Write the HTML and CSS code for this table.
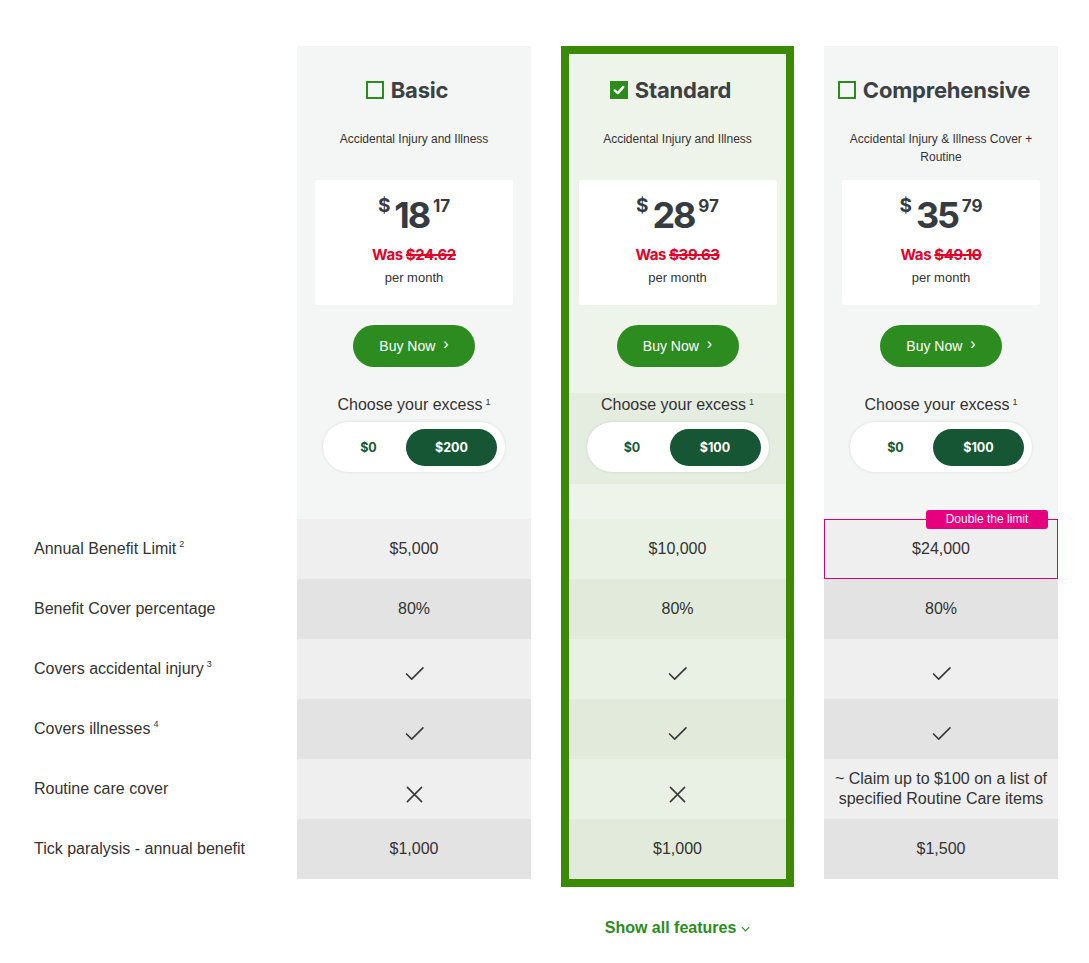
FILE: index.html
```html
<!DOCTYPE html>
<html lang="en">
<head>
<meta charset="utf-8">
<title>Compare plans</title>
<link rel="stylesheet" href="styles.css">
</head>
<body>
<div class="page">
  <div class="compare">
    <div class="labels">
      <div class="labels-head"></div>
      <div class="label-row">Annual Benefit Limit<sup>2</sup></div>
      <div class="label-row">Benefit Cover percentage</div>
      <div class="label-row">Covers accidental injury<sup>3</sup></div>
      <div class="label-row">Covers illnesses<sup>4</sup></div>
      <div class="label-row">Routine care cover</div>
      <div class="label-row">Tick paralysis - annual benefit</div>
    </div>

    <div class="plan">
      <div class="plan-head">
        <div class="plan-title"><span class="box"></span>Basic</div>
        <div class="plan-sub">Accidental Injury and Illness</div>
        <div class="price-card">
          <div class="price"><span class="cur">$</span><span class="dollars">18</span><span class="cents">17</span></div>
          <div class="was">Was <s>$24.62</s></div>
          <div class="per">per month</div>
        </div>
        <button class="buy">Buy Now <span class="chev">›</span></button>
        <div class="excess">
          <div class="excess-label">Choose your excess<sup>1</sup></div>
          <div class="toggle"><span class="opt">$0</span><span class="opt on">$200</span></div>
        </div>
      </div>
      <div class="cell">$5,000</div>
      <div class="cell dark">80%</div>
      <div class="cell"><svg class="ico" viewBox="0 0 20 16"><polyline points="1.5,8.5 7,14 19,2"/></svg></div>
      <div class="cell dark"><svg class="ico" viewBox="0 0 20 16"><polyline points="1.5,8.5 7,14 19,2"/></svg></div>
      <div class="cell"><svg class="ico x" viewBox="0 0 18 18"><path d="M1.5 1.5 L16.5 16.5 M16.5 1.5 L1.5 16.5"/></svg></div>
      <div class="cell dark">$1,000</div>
    </div>

    <div class="plan selected">
      <div class="plan-head">
        <div class="plan-title"><span class="box checked"><svg viewBox="0 0 18 18"><polyline points="3.5,9.5 7.5,13 14.5,5"/></svg></span>Standard</div>
        <div class="plan-sub">Accidental Injury and Illness</div>
        <div class="price-card">
          <div class="price"><span class="cur">$</span><span class="dollars">28</span><span class="cents">97</span></div>
          <div class="was">Was <s>$39.63</s></div>
          <div class="per">per month</div>
        </div>
        <button class="buy">Buy Now <span class="chev">›</span></button>
        <div class="excess">
          <div class="excess-label">Choose your excess<sup>1</sup></div>
          <div class="toggle"><span class="opt">$0</span><span class="opt on">$100</span></div>
        </div>
      </div>
      <div class="cell">$10,000</div>
      <div class="cell dark">80%</div>
      <div class="cell"><svg class="ico" viewBox="0 0 20 16"><polyline points="1.5,8.5 7,14 19,2"/></svg></div>
      <div class="cell dark"><svg class="ico" viewBox="0 0 20 16"><polyline points="1.5,8.5 7,14 19,2"/></svg></div>
      <div class="cell"><svg class="ico x" viewBox="0 0 18 18"><path d="M1.5 1.5 L16.5 16.5 M16.5 1.5 L1.5 16.5"/></svg></div>
      <div class="cell dark">$1,000</div>
    </div>

    <div class="plan">
      <div class="plan-head">
        <div class="plan-title"><span class="box"></span>Comprehensive</div>
        <div class="plan-sub">Accidental Injury &amp; Illness Cover + Routine</div>
        <div class="price-card">
          <div class="price"><span class="cur">$</span><span class="dollars">35</span><span class="cents">79</span></div>
          <div class="was">Was <s>$49.10</s></div>
          <div class="per">per month</div>
        </div>
        <button class="buy">Buy Now <span class="chev">›</span></button>
        <div class="excess">
          <div class="excess-label">Choose your excess<sup>1</sup></div>
          <div class="toggle"><span class="opt">$0</span><span class="opt on">$100</span></div>
        </div>
      </div>
      <div class="cell highlight">$24,000<span class="badge">Double the limit</span></div>
      <div class="cell dark">80%</div>
      <div class="cell"><svg class="ico" viewBox="0 0 20 16"><polyline points="1.5,8.5 7,14 19,2"/></svg></div>
      <div class="cell dark"><svg class="ico" viewBox="0 0 20 16"><polyline points="1.5,8.5 7,14 19,2"/></svg></div>
      <div class="cell routine">~ Claim up to $100 on a list of specified Routine Care items</div>
      <div class="cell dark">$1,500</div>
    </div>

    <a class="show-all" href="#">Show all features <svg class="down" viewBox="0 0 10 6"><polyline points="1,1 5,5 9,1"/></svg></a>
  </div>
</div>
</body>
</html>
```

FILE: styles.css
```css
* { box-sizing: border-box; }

body {
  margin: 0;
  background: #ffffff;
  font-family: "Liberation Sans", Arial, sans-serif;
  color: #333333;
}

.page {
  padding-top: 46px;
}

.compare {
  display: grid;
  grid-template-columns: 267px 234px 233px 234px;
  column-gap: 30px;
  align-items: start;
}

sup {
  font-size: 9px;
  vertical-align: baseline;
  position: relative;
  top: -5px;
  margin-left: 3px;
  line-height: 0;
}

/* labels */
.labels-head { height: 473px; }

.label-row {
  height: 60px;
  display: flex;
  align-items: center;
  padding-left: 34px;
  font-size: 16px;
  color: #333;
}

/* plans */
.plan {
  background: #f4f6f5;
  display: flex;
  flex-direction: column;
}

.plan-head {
  height: 473px;
  display: flex;
  flex-direction: column;
  align-items: center;
  padding-top: 30px;
}

.plan.selected {
  border: 8px solid #3b8a04;
  background: #eef4ea;
}

.plan.selected .plan-head {
  height: 465px;
  padding-top: 22px;
}

.plan-title {
  display: flex;
  align-items: center;
  gap: 7px;
  height: 28px;
  padding-right: 14px;
  font-family: "Inter", "Liberation Sans", sans-serif;
  font-weight: 700;
  font-size: 22px;
  letter-spacing: -0.2px;
  color: #3b4145;
}

.box {
  width: 18px;
  height: 18px;
  border: 2px solid #2e8a1e;
  display: inline-flex;
  align-items: center;
  justify-content: center;
}

.box.checked {
  background: #2e8a1e;
}

.box.checked svg {
  width: 18px;
  height: 18px;
  fill: none;
  stroke: #fff;
  stroke-width: 3;
  stroke-linecap: round;
  stroke-linejoin: round;
}

.plan-sub {
  margin-top: 26px;
  height: 50px;
  padding: 0 20px;
  max-width: 234px;
  font-size: 12px;
  line-height: 18px;
  text-align: center;
  color: #333;
}

.price-card {
  width: 198px;
  height: 125px;
  background: #fff;
  border-radius: 3px;
  display: flex;
  flex-direction: column;
  align-items: center;
  padding-top: 15px;
}

.price {
  display: flex;
  align-items: flex-start;
  font-family: "Inter", "Liberation Sans", sans-serif;
  font-weight: 700;
  color: #353b40;
  height: 40px;
}

.cur {
  font-size: 19px;
  line-height: 22px;
  margin-right: 4px;
}

.dollars {
  font-size: 36px;
  line-height: 40px;
  letter-spacing: -2.2px;
  font-variant-numeric: proportional-nums;
}

.cents {
  font-size: 17px;
  line-height: 22px;
  margin-left: 4px;
}

.was {
  margin-top: 10px;
  font-family: "Inter", "Liberation Sans", sans-serif;
  font-weight: 700;
  font-size: 15px;
  line-height: 20px;
  letter-spacing: -0.4px;
  color: #e2002b;
}

.was s {
  text-decoration-thickness: 2px;
}

.per {
  margin-top: 4px;
  font-size: 13px;
  line-height: 18px;
  color: #333;
}

.buy {
  margin-top: 20px;
  width: 122px;
  height: 42px;
  border: 0;
  border-radius: 21px;
  background: #2d8c1f;
  color: #fff;
  font-family: "Liberation Sans", Arial, sans-serif;
  font-size: 14px;
  padding: 0;
  display: flex;
  align-items: center;
  justify-content: center;
  gap: 8px;
}

.chev {
  font-size: 16px;
  line-height: 1;
  position: relative;
  top: -2px;
}

.excess {
  margin-top: 26px;
  width: 100%;
  display: flex;
  flex-direction: column;
  align-items: center;
  padding: 1px 0 12px;
}

.plan.selected .excess {
  background: #e5ece0;
}

.excess-label {
  font-size: 16px;
  line-height: 22px;
  color: #333;
}

.toggle {
  margin-top: 6px;
  width: 182px;
  height: 50px;
  border-radius: 25px;
  background: #fff;
  box-shadow: 0 0 3px rgba(0, 0, 0, 0.12);
  padding: 7px 8px 6px 8px;
  display: flex;
}

.opt {
  flex: 0 0 75px;
  display: flex;
  align-items: center;
  justify-content: center;
  font-family: "Inter", "Liberation Sans", sans-serif;
  font-weight: 700;
  font-size: 12.5px;
  color: #1a5a35;
  border-radius: 19px;
}

.opt.on {
  flex: 0 0 91px;
  background: #165634;
  color: #fff;
}

/* rows */
.cell {
  height: 60px;
  display: flex;
  align-items: center;
  justify-content: center;
  text-align: center;
  font-size: 16px;
  line-height: 20px;
  color: #333;
  background: #efefef;
  position: relative;
}

.cell.dark { background: #e3e3e3; }

.plan.selected .cell { background: #e9f1e4; }
.plan.selected .cell.dark { background: #e1eadb; }

.cell.routine { padding: 0 8px; }

.cell.highlight {
  box-shadow: inset 0 0 0 1px #d8007c;
}

.badge {
  position: absolute;
  top: -9px;
  right: 10px;
  width: 122px;
  height: 19px;
  border-radius: 3px;
  background: #e6007e;
  color: #fff;
  font-size: 12px;
  line-height: 19px;
  text-align: center;
}

.ico {
  width: 19px;
  height: 15px;
  fill: none;
  stroke: #3a3a3a;
  stroke-width: 1.7;
  stroke-linecap: round;
  stroke-linejoin: round;
  margin-top: 8px;
}

.ico.x {
  width: 17px;
  height: 17px;
  margin-top: 10px;
}

.show-all {
  grid-column: 3;
  margin-top: 31px;
  display: flex;
  align-items: center;
  justify-content: center;
  gap: 5px;
  font-size: 16px;
  line-height: 20px;
  font-weight: 700;
  color: #2d8c1f;
  text-decoration: none;
}

.down {
  width: 9px;
  height: 6px;
  fill: none;
  stroke: #2d8c1f;
  stroke-width: 1.3;
  margin-top: 2px;
}
```
